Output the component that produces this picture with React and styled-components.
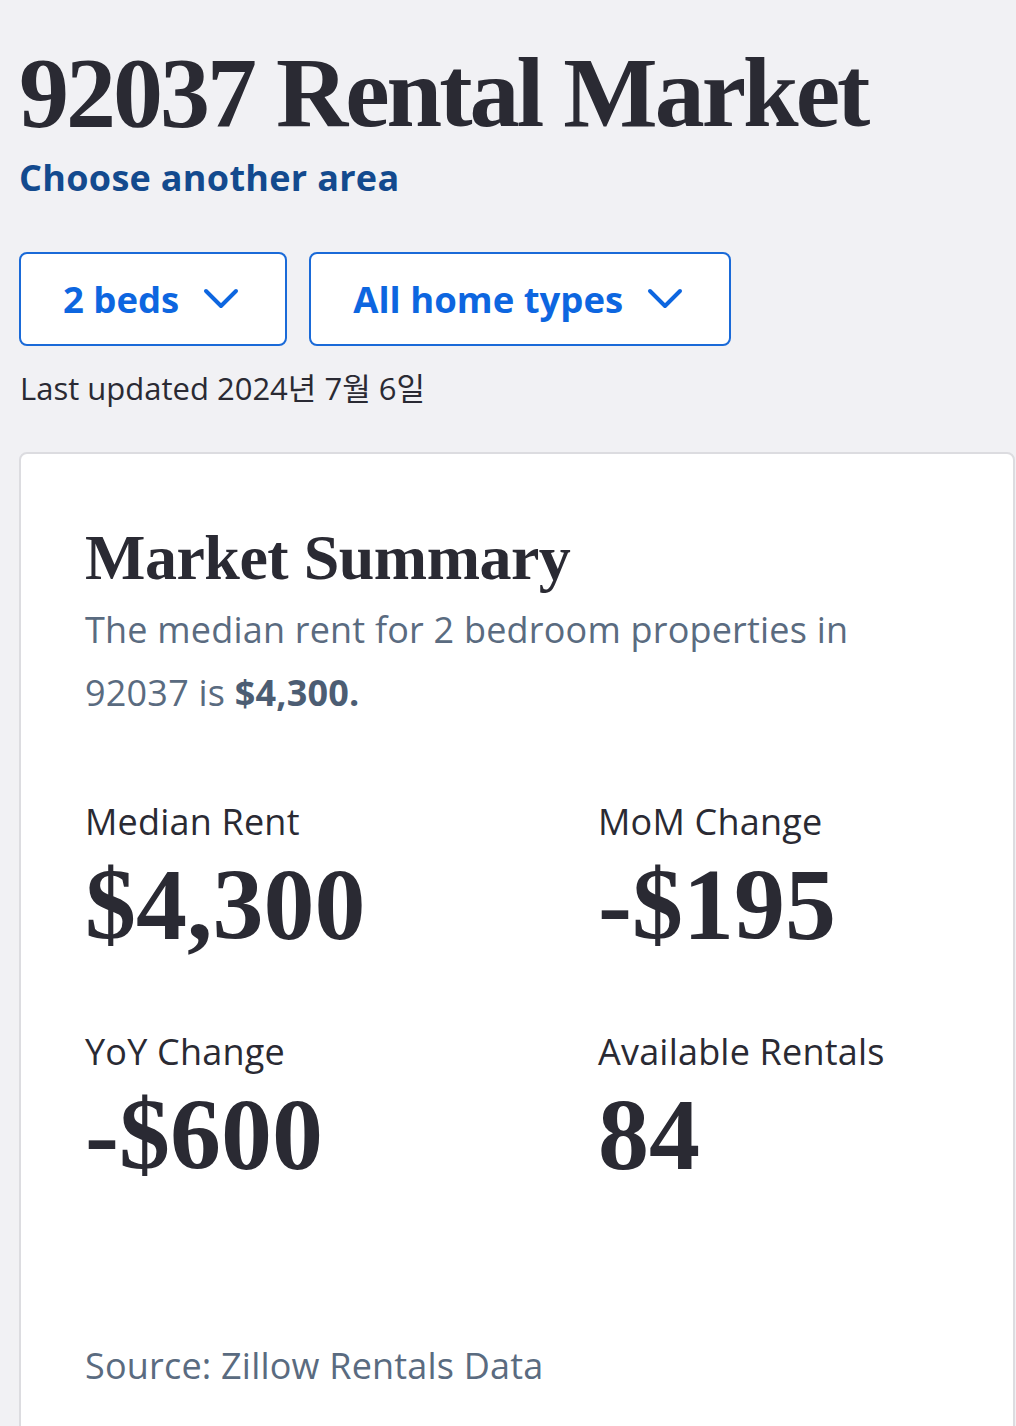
import React from 'react'
import styled, { createGlobalStyle } from 'styled-components';

const GlobalStyle = createGlobalStyle`
  html, body {
    margin: 0;
    padding: 0;
    background: #f1f1f4;
  }
  body {
    font-family: "Open Sans", "Noto Sans CJK KR", sans-serif;
    color: #2a2a33;
  }
`;

const Page = styled.div`
  padding: 33px 1px 0 19px;
  min-height: 1426px;
  box-sizing: border-box;
  overflow: hidden;
`;

const Title = styled.h1`
  margin: 0;
  font-family: "Liberation Serif", serif;
  font-weight: 700;
  font-size: 100px;
  line-height: 120px;
  letter-spacing: -3px;
  color: #2a2a33;
`;

const AreaLink = styled.a`
  display: inline-block;
  font-size: 36px;
  font-weight: 700;
  letter-spacing: 0.3px;
  color: #134a8e;
  text-decoration: none;
  line-height: 50px;
`;

const Filters = styled.div`
  display: flex;
  gap: 22px;
  margin-top: 49px;
`;

const Dropdown = styled.button`
  display: flex;
  align-items: center;
  gap: 24px;
  height: 94px;
  padding: 0 46px 0 42px;
  background: #fff;
  border: 2px solid #1a6ad8;
  border-radius: 8px;
  font-family: "Open Sans", sans-serif;
  font-size: 36.5px;
  font-weight: 700;
  color: #0d66e0;
  box-sizing: border-box;
`;

const Updated = styled.p`
  margin: 22px 0 0 1px;
  font-size: 31px;
  line-height: 40px;
  color: #2a2a33;
`;

const Card = styled.section`
  margin-top: 44px;
  background: #fff;
  border: 2px solid #dcdce0;
  border-radius: 8px;
  padding: 64px 0 40px 64px;
  min-height: 1000px;
  box-sizing: border-box;
`;

const CardTitle = styled.h2`
  margin: 0;
  font-family: "Liberation Serif", serif;
  font-weight: 700;
  font-size: 64px;
  line-height: 80px;
  letter-spacing: -0.5px;
  color: #2a2a33;
`;

const Summary = styled.div`
  max-width: 800px;
  font-size: 36px;
  line-height: 63px;
  letter-spacing: 0.2px;
  color: #5a6b80;
`;

const Amount = styled.span`
  font-weight: 700;
  color: #4c5d73;
`;

const Stats = styled.div`
  display: grid;
  grid-template-columns: 513px 1fr;
  row-gap: 64px;
  margin-top: 75px;
`;

const Stat = styled.div`
  display: flex;
  flex-direction: column;
`;

const StatLabel = styled.span`
  font-size: 36px;
  line-height: 46px;
  letter-spacing: 0.2px;
  color: #2a2a33;
`;

const StatValue = styled.span`
  font-family: "Liberation Serif", serif;
  font-weight: 700;
  font-size: 102px;
  line-height: 120px;
  color: #2a2a33;
`;

const Source = styled.p`
  margin: 148px 0 0;
  font-size: 36px;
  line-height: 46px;
  letter-spacing: 0.2px;
  color: #5a6b80;
`;

const Chevron = () => (
  <svg width="36" height="22" viewBox="0 0 36 22" fill="none">
    <path d="M3 3 L18 18 L33 3" stroke="#0d66e0" strokeWidth="4" strokeLinecap="round" strokeLinejoin="round" />
  </svg>
);

const stats = [
  { label: 'Median Rent', value: '$4,300' },
  { label: 'MoM Change', value: '-$195' },
  { label: 'YoY Change', value: '-$600' },
  { label: 'Available Rentals', value: '84' },
];

export default function App() {
  return (
    <Page>
      <GlobalStyle />
      <Title>92037 Rental Market</Title>
      <AreaLink href="#">Choose another area</AreaLink>
      <Filters>
        <Dropdown>2 beds <Chevron /></Dropdown>
        <Dropdown>All home types <Chevron /></Dropdown>
      </Filters>
      <Updated>Last updated 2024년 7월 6일</Updated>
      <Card>
        <CardTitle>Market Summary</CardTitle>
        <Summary>
          The median rent for 2 bedroom properties in 92037 is <Amount>$4,300.</Amount>
        </Summary>
        <Stats>
          {stats.map(s => (
            <Stat key={s.label}>
              <StatLabel>{s.label}</StatLabel>
              <StatValue>{s.value}</StatValue>
            </Stat>
          ))}
        </Stats>
        <Source>Source: Zillow Rentals Data</Source>
      </Card>
    </Page>
  )
}
